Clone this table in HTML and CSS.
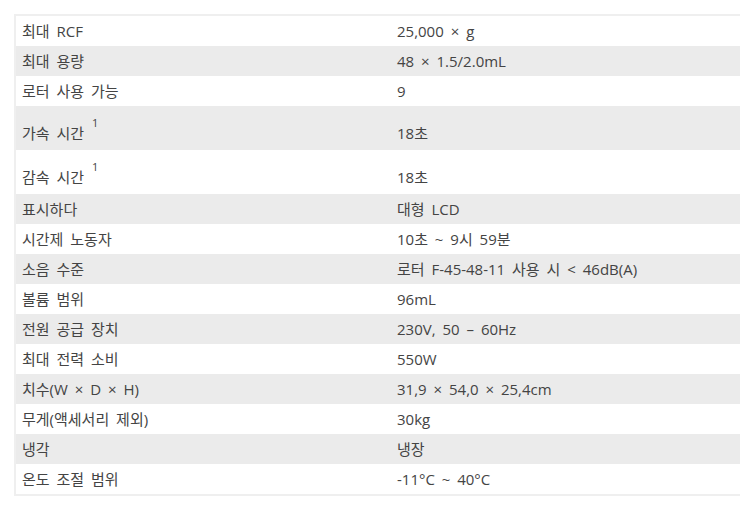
FILE: index.html
```html
<!DOCTYPE html>
<html lang="ko">
<head>
<meta charset="utf-8">
<link rel="stylesheet" href="styles.css">
</head>
<body>
<div class="wrap">
<table class="spec">
<tbody>
<tr><td>최대 RCF</td><td>25,000 × g</td></tr>
<tr><td>최대 용량</td><td>48 × 1.5/2.0mL</td></tr>
<tr><td>로터 사용 가능</td><td>9</td></tr>
<tr class="tall"><td>가속 시간 <sup>1</sup></td><td>18초</td></tr>
<tr class="tall"><td>감속 시간 <sup>1</sup></td><td>18초</td></tr>
<tr><td>표시하다</td><td>대형 LCD</td></tr>
<tr><td>시간제 노동자</td><td>10초 ~ 9시 59분</td></tr>
<tr><td>소음 수준</td><td>로터 F-45-48-11 사용 시 &lt; 46dB(A)</td></tr>
<tr><td>볼륨 범위</td><td>96mL</td></tr>
<tr><td>전원 공급 장치</td><td>230V, 50 – 60Hz</td></tr>
<tr><td>최대 전력 소비</td><td>550W</td></tr>
<tr><td>치수(W × D × H)</td><td>31,9 × 54,0 × 25,4cm</td></tr>
<tr><td>무게(액세서리 제외)</td><td>30kg</td></tr>
<tr><td>냉각</td><td>냉장</td></tr>
<tr><td>온도 조절 범위</td><td>-11°C ~ 40°C</td></tr>
</tbody>
</table>
</div>
</body>
</html>
```
FILE: styles.css
```css
html, body {
  margin: 0;
  padding: 0;
  overflow: hidden;
  background: #fff;
}
.wrap {
  padding: 14px 0 0 14px;
}
.spec {
  border-collapse: collapse;
  width: 740px;
  border: 2px solid #efefef;
  font-family: "Open Sans", "Noto Sans CJK KR", sans-serif;
  font-size: 15px;
  word-spacing: 3px;
  color: #444;
}
.spec td {
  padding: 5px 6px;
  line-height: 20px;
  height: 20px;
  vertical-align: baseline;
}
.spec td:first-child {
  width: 363px;
}
.spec tr:nth-child(even) td {
  background: #ebebeb;
}
.spec tr.tall td {
  height: 20px;
  padding-top: 17px;
  padding-bottom: 7px;
}
.spec sup {
  font-size: 11px;
  line-height: 0;
  vertical-align: baseline;
  position: relative;
  top: -12px;
  margin-left: 1px;
}
```
